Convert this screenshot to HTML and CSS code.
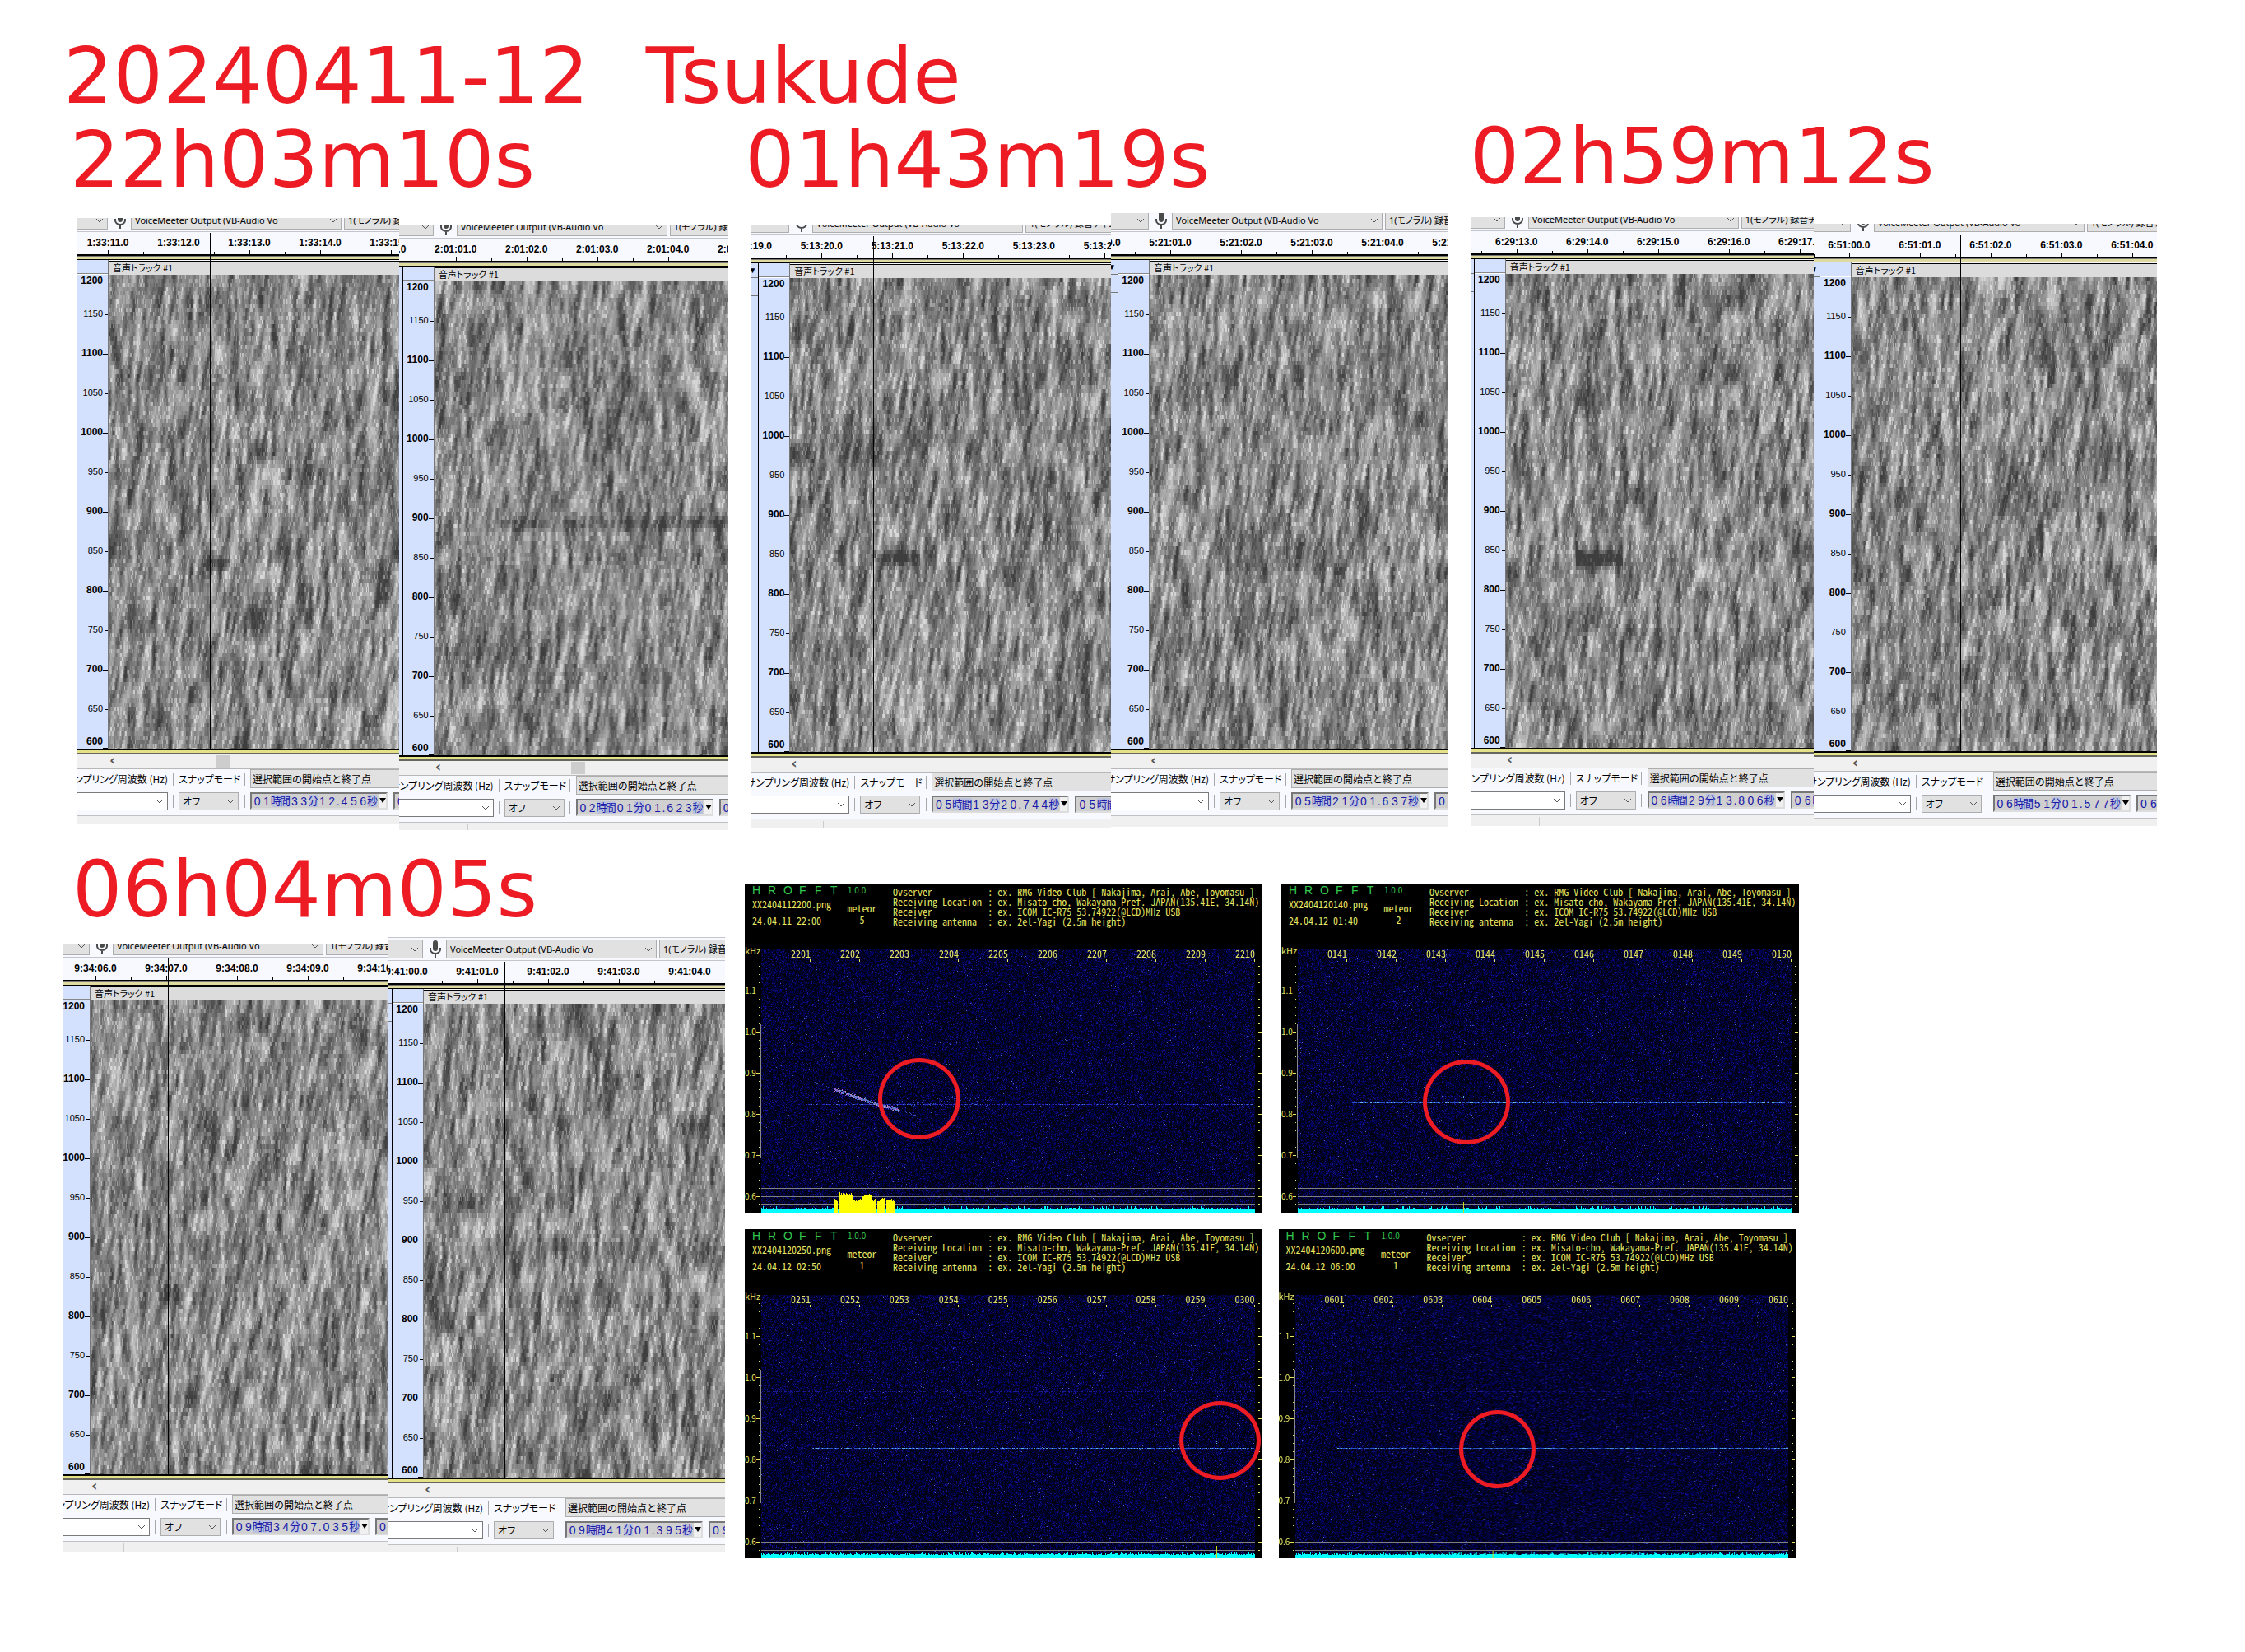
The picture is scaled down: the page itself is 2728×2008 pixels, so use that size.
FILE: index.html
```html
<!DOCTYPE html>
<html lang="ja">
<head>
<meta charset="utf-8">
<title>20240411-12 Tsukude</title>
<link rel="stylesheet" href="styles.css">
</head>
<body>
<svg width="0" height="0" class="defs" aria-hidden="true">
  <symbol id="mic" viewBox="0 0 14 22"><rect x="4" y="0" width="6" height="13" rx="3" fill="#4a4a4a"/><path d="M1 9v2a6 5 0 0 0 12 0V9M7 16v5" fill="none" stroke="#4a4a4a" stroke-width="2"/></symbol>
</svg>
<main>
<h1><span>20240411-12</span><span>Tsukude</span></h1>

<div class="row row-top">
<section class="event">
<h2>22h03m10s</h2>
<div class="pair pair-1">
  <article class="panel p1">
    <div class="toolbar"><select class="lead" aria-label="ホスト"></select><svg class="mic"><use href="#mic"/></svg><select class="device" aria-label="録音デバイス"><option>VoiceMeeter Output (VB-Audio Vo</option></select><select class="channels" aria-label="録音チャンネル"><option>1(モノラル) 録音チャンネル</option></select></div>
    <div class="ruler"><span>1:33:11.0</span><span>1:33:12.0</span><span>1:33:13.0</span><span>1:33:14.0</span><span>1:33:15.0</span></div>
    <div class="track"><div class="stub"></div><ol class="scale"><li>1200</li><li>1150</li><li>1100</li><li>1050</li><li>1000</li><li>950</li><li>900</li><li>850</li><li>800</li><li>750</li><li>700</li><li>650</li><li>600</li></ol>
      <div class="wave"><h3>音声トラック #1</h3><canvas data-seed="11" data-echo="119,147,350,20,10"></canvas></div></div>
    <div class="scroll"><b>‹</b><i></i></div>
    <div class="controls">
      <label class="rate-label" for="r1">サンプリング周波数 (Hz)</label><i class="sep"></i><label for="s1">スナップモード</label><i class="sep"></i><select class="range" aria-label="選択範囲"><option>選択範囲の開始点と終了点</option></select>
      <select id="r1" class="rate"></select><i class="sep"></i><select id="s1" class="snap"><option>オフ</option></select><i class="sep"></i><div class="times"><output>01時間33分12.456秒</output><output>01</output></div>
    </div>
    <div class="status"></div>
  </article>
  <article class="panel p2">
    <div class="toolbar"><select class="lead" aria-label="ホスト"></select><svg class="mic"><use href="#mic"/></svg><select class="device" aria-label="録音デバイス"><option>VoiceMeeter Output (VB-Audio Vo</option></select><select class="channels" aria-label="録音チャンネル"><option>1(モノラル) 録音チャンネル</option></select></div>
    <div class="ruler"><span>2:01:00.0</span><span>2:01:01.0</span><span>2:01:02.0</span><span>2:01:03.0</span><span>2:01:04.0</span><span>2:01:05.0</span></div>
    <div class="track"><div class="stub"></div><ol class="scale"><li>1200</li><li>1150</li><li>1100</li><li>1050</li><li>1000</li><li>950</li><li>900</li><li>850</li><li>800</li><li>750</li><li>700</li><li>650</li><li>600</li></ol>
      <div class="wave"><h3>音声トラック #1</h3><canvas data-seed="22" data-echo="80,370,294,12,9"></canvas></div></div>
    <div class="scroll"><b>‹</b><i></i></div>
    <div class="controls">
      <label class="rate-label" for="r2">サンプリング周波数 (Hz)</label><i class="sep"></i><label for="s2">スナップモード</label><i class="sep"></i><select class="range" aria-label="選択範囲"><option>選択範囲の開始点と終了点</option></select>
      <select id="r2" class="rate"></select><i class="sep"></i><select id="s2" class="snap"><option>オフ</option></select><i class="sep"></i><div class="times"><output>02時間01分01.623秒</output><output>02</output></div>
    </div>
    <div class="status"></div>
  </article>
</div>
</section>

<section class="event">
<h2>01h43m19s</h2>
<div class="pair pair-2">
  <article class="panel p3">
    <div class="toolbar"><select class="lead" aria-label="ホスト"></select><svg class="mic"><use href="#mic"/></svg><select class="device" aria-label="録音デバイス"><option>VoiceMeeter Output (VB-Audio Vo</option></select><select class="channels" aria-label="録音チャンネル"><option>1(モノラル) 録音チャンネル</option></select></div>
    <div class="ruler"><span>5:13:19.0</span><span>5:13:20.0</span><span>5:13:21.0</span><span>5:13:22.0</span><span>5:13:23.0</span><span>5:13:24.0</span></div>
    <div class="track"><div class="stub menu"></div><ol class="scale"><li>1200</li><li>1150</li><li>1100</li><li>1050</li><li>1000</li><li>950</li><li>900</li><li>850</li><li>800</li><li>750</li><li>700</li><li>650</li><li>600</li></ol>
      <div class="wave"><h3>音声トラック #1</h3><canvas data-seed="33" data-echo="102,158,340,16,10"></canvas></div></div>
    <div class="scroll"><b>‹</b></div>
    <div class="controls">
      <label class="rate-label" for="r3">サンプリング周波数 (Hz)</label><i class="sep"></i><label for="s3">スナップモード</label><i class="sep"></i><select class="range" aria-label="選択範囲"><option>選択範囲の開始点と終了点</option></select>
      <select id="r3" class="rate"></select><i class="sep"></i><select id="s3" class="snap"><option>オフ</option></select><i class="sep"></i><div class="times"><output>05時間13分20.744秒</output><output>05時間</output></div>
    </div>
    <div class="status"></div>
  </article>
  <article class="panel p4">
    <div class="toolbar"><select class="lead" aria-label="ホスト"></select><svg class="mic"><use href="#mic"/></svg><select class="device" aria-label="録音デバイス"><option>VoiceMeeter Output (VB-Audio Vo</option></select><select class="channels" aria-label="録音チャンネル"><option>1(モノラル) 録音チャンネル</option></select></div>
    <div class="ruler"><span>5:21:00.0</span><span>5:21:01.0</span><span>5:21:02.0</span><span>5:21:03.0</span><span>5:21:04.0</span><span>5:21:05.0</span></div>
    <div class="track"><div class="stub menu"></div><ol class="scale"><li>1200</li><li>1150</li><li>1100</li><li>1050</li><li>1000</li><li>950</li><li>900</li><li>850</li><li>800</li><li>750</li><li>700</li><li>650</li><li>600</li></ol>
      <div class="wave"><h3>音声トラック #1</h3><canvas data-seed="44" data-echo="80,245,354,5,8"></canvas></div></div>
    <div class="scroll"><b>‹</b></div>
    <div class="controls">
      <label class="rate-label" for="r4">サンプリング周波数 (Hz)</label><i class="sep"></i><label for="s4">スナップモード</label><i class="sep"></i><select class="range" aria-label="選択範囲"><option>選択範囲の開始点と終了点</option></select>
      <select id="r4" class="rate"></select><i class="sep"></i><select id="s4" class="snap"><option>オフ</option></select><i class="sep"></i><div class="times"><output>05時間21分01.637秒</output><output>05</output></div>
    </div>
    <div class="status"></div>
  </article>
</div>
</section>

<section class="event raised">
<h2>02h59m12s</h2>
<div class="pair pair-3">
  <article class="panel p5">
    <div class="toolbar"><select class="lead" aria-label="ホスト"></select><svg class="mic"><use href="#mic"/></svg><select class="device" aria-label="録音デバイス"><option>VoiceMeeter Output (VB-Audio Vo</option></select><select class="channels" aria-label="録音チャンネル"><option>1(モノラル) 録音チャンネル</option></select></div>
    <div class="ruler"><span>6:29:13.0</span><span>6:29:14.0</span><span>6:29:15.0</span><span>6:29:16.0</span><span>6:29:17.0</span></div>
    <div class="track"><div class="stub"></div><ol class="scale"><li>1200</li><li>1150</li><li>1100</li><li>1050</li><li>1000</li><li>950</li><li>900</li><li>850</li><li>800</li><li>750</li><li>700</li><li>650</li><li>600</li></ol>
      <div class="wave"><h3>音声トラック #1</h3><canvas data-seed="55" data-echo="84,142,346,24,11"></canvas></div></div>
    <div class="scroll"><b>‹</b></div>
    <div class="controls">
      <label class="rate-label" for="r5">サンプリング周波数 (Hz)</label><i class="sep"></i><label for="s5">スナップモード</label><i class="sep"></i><select class="range" aria-label="選択範囲"><option>選択範囲の開始点と終了点</option></select>
      <select id="r5" class="rate"></select><i class="sep"></i><select id="s5" class="snap"><option>オフ</option></select><i class="sep"></i><div class="times"><output>06時間29分13.806秒</output><output>06時</output></div>
    </div>
    <div class="status"></div>
  </article>
  <article class="panel p6">
    <div class="toolbar"><select class="lead" aria-label="ホスト"></select><svg class="mic"><use href="#mic"/></svg><select class="device" aria-label="録音デバイス"><option>VoiceMeeter Output (VB-Audio Vo</option></select><select class="channels" aria-label="録音チャンネル"><option>1(モノラル) 録音チャンネル</option></select></div>
    <div class="ruler"><span>6:51:00.0</span><span>6:51:01.0</span><span>6:51:02.0</span><span>6:51:03.0</span><span>6:51:04.0</span></div>
    <div class="track"><div class="stub menu"></div><ol class="scale"><li>1200</li><li>1150</li><li>1100</li><li>1050</li><li>1000</li><li>950</li><li>900</li><li>850</li><li>800</li><li>750</li><li>700</li><li>650</li><li>600</li></ol>
      <div class="wave"><h3>音声トラック #1</h3><canvas data-seed="66"></canvas></div></div>
    <div class="scroll"><b>‹</b></div>
    <div class="controls">
      <label class="rate-label" for="r6">サンプリング周波数 (Hz)</label><i class="sep"></i><label for="s6">スナップモード</label><i class="sep"></i><select class="range" aria-label="選択範囲"><option>選択範囲の開始点と終了点</option></select>
      <select id="r6" class="rate"></select><i class="sep"></i><select id="s6" class="snap"><option>オフ</option></select><i class="sep"></i><div class="times"><output>06時間51分01.577秒</output><output>06</output></div>
    </div>
    <div class="status"></div>
  </article>
</div>
</section>
</div>

<div class="row row-bottom">
<section class="event indented">
<h2>06h04m05s</h2>
<div class="pair pair-4">
  <article class="panel p7">
    <div class="toolbar"><select class="lead" aria-label="ホスト"></select><svg class="mic"><use href="#mic"/></svg><select class="device" aria-label="録音デバイス"><option>VoiceMeeter Output (VB-Audio Vo</option></select><select class="channels" aria-label="録音チャンネル"><option>1(モノラル) 録音チャンネル</option></select></div>
    <div class="ruler"><span>9:34:06.0</span><span>9:34:07.0</span><span>9:34:08.0</span><span>9:34:09.0</span><span>9:34:10.0</span></div>
    <div class="track"><div class="stub"></div><ol class="scale"><li>1200</li><li>1150</li><li>1100</li><li>1050</li><li>1000</li><li>950</li><li>900</li><li>850</li><li>800</li><li>750</li><li>700</li><li>650</li><li>600</li></ol>
      <div class="wave"><h3>音声トラック #1</h3><canvas data-seed="77" data-echo="88,108,354,14,10"></canvas></div></div>
    <div class="scroll"><b>‹</b></div>
    <div class="controls">
      <label class="rate-label" for="r7">サンプリング周波数 (Hz)</label><i class="sep"></i><label for="s7">スナップモード</label><i class="sep"></i><select class="range" aria-label="選択範囲"><option>選択範囲の開始点と終了点</option></select>
      <select id="r7" class="rate"></select><i class="sep"></i><select id="s7" class="snap"><option>オフ</option></select><i class="sep"></i><div class="times"><output>09時間34分07.035秒</output><output>09</output></div>
    </div>
    <div class="status"></div>
  </article>
  <article class="panel p8">
    <div class="toolbar"><select class="lead" aria-label="ホスト"></select><svg class="mic"><use href="#mic"/></svg><select class="device" aria-label="録音デバイス"><option>VoiceMeeter Output (VB-Audio Vo</option></select><select class="channels" aria-label="録音チャンネル"><option>1(モノラル) 録音チャンネル</option></select></div>
    <div class="ruler"><span>9:41:00.0</span><span>9:41:01.0</span><span>9:41:02.0</span><span>9:41:03.0</span><span>9:41:04.0</span></div>
    <div class="track"><div class="stub"></div><ol class="scale"><li>1200</li><li>1150</li><li>1100</li><li>1050</li><li>1000</li><li>950</li><li>900</li><li>850</li><li>800</li><li>750</li><li>700</li><li>650</li><li>600</li></ol>
      <div class="wave"><h3>音声トラック #1</h3><canvas data-seed="88"></canvas></div></div>
    <div class="scroll"><b>‹</b></div>
    <div class="controls">
      <label class="rate-label" for="r8">サンプリング周波数 (Hz)</label><i class="sep"></i><label for="s8">スナップモード</label><i class="sep"></i><select class="range" aria-label="選択範囲"><option>選択範囲の開始点と終了点</option></select>
      <select id="r8" class="rate"></select><i class="sep"></i><select id="s8" class="snap"><option>オフ</option></select><i class="sep"></i><div class="times"><output>09時間41分01.395秒</output><output>09</output></div>
    </div>
    <div class="status"></div>
  </article>
</div>
</section>

<div class="ffts">
<div class="fft-row">
  <article class="fft c1">
    <header>
      <div class="name"><b>H</b><b>R</b><b>O</b><b>F</b><b>F</b><b>T</b><span>1.0.0</span></div>
      <div class="file">XX2404112200.png</div><div class="date">24.04.11 22:00</div><div class="count">meteor<br>5</div>
      <table><tr><td>Ovserver</td><td>: ex. RMG Video Club [ Nakajima, Arai, Abe, Toyomasu ]</td></tr><tr><td>Receiving Location</td><td>: ex. Misato-cho, Wakayama-Pref. JAPAN(135.41E, 34.14N)</td></tr><tr><td>Receiver</td><td>: ex. ICOM IC-R75 53.74922(@LCD)MHz USB</td></tr><tr><td>Receiving antenna</td><td>: ex. 2el-Yagi (2.5m height)</td></tr></table>
    </header>
    <div class="graph"><ul class="khz"><li>kHz</li><li>1.1</li><li>1.0</li><li>0.9</li><li>0.8</li><li>0.7</li><li>0.6</li></ul>
      <div class="plot"><canvas data-seed="101" data-line="188,55" data-soft="1" data-streak="1"></canvas><div class="clock"><span>2201</span><span>2202</span><span>2203</span><span>2204</span><span>2205</span><span>2206</span><span>2207</span><span>2208</span><span>2209</span><span>2210</span></div></div>
      <div class="edge"></div></div>
    <div class="ring"></div>
  </article>
  <article class="fft c2">
    <header>
      <div class="name"><b>H</b><b>R</b><b>O</b><b>F</b><b>F</b><b>T</b><span>1.0.0</span></div>
      <div class="file">XX2404120140.png</div><div class="date">24.04.12 01:40</div><div class="count">meteor<br>2</div>
      <table><tr><td>Ovserver</td><td>: ex. RMG Video Club [ Nakajima, Arai, Abe, Toyomasu ]</td></tr><tr><td>Receiving Location</td><td>: ex. Misato-cho, Wakayama-Pref. JAPAN(135.41E, 34.14N)</td></tr><tr><td>Receiver</td><td>: ex. ICOM IC-R75 53.74922(@LCD)MHz USB</td></tr><tr><td>Receiving antenna</td><td>: ex. 2el-Yagi (2.5m height)</td></tr></table>
    </header>
    <div class="graph"><ul class="khz"><li>kHz</li><li>1.1</li><li>1.0</li><li>0.9</li><li>0.8</li><li>0.7</li><li>0.6</li></ul>
      <div class="plot"><canvas data-seed="102" data-line="186,65" data-marks="201,13,255,9"></canvas><div class="clock"><span>0141</span><span>0142</span><span>0143</span><span>0144</span><span>0145</span><span>0146</span><span>0147</span><span>0148</span><span>0149</span><span>0150</span></div></div>
      <div class="edge"></div></div>
    <div class="ring"></div>
  </article>
</div>
<div class="fft-row tight">
  <article class="fft c3">
    <header>
      <div class="name"><b>H</b><b>R</b><b>O</b><b>F</b><b>F</b><b>T</b><span>1.0.0</span></div>
      <div class="file">XX2404120250.png</div><div class="date">24.04.12 02:50</div><div class="count">meteor<br>1</div>
      <table><tr><td>Ovserver</td><td>: ex. RMG Video Club [ Nakajima, Arai, Abe, Toyomasu ]</td></tr><tr><td>Receiving Location</td><td>: ex. Misato-cho, Wakayama-Pref. JAPAN(135.41E, 34.14N)</td></tr><tr><td>Receiver</td><td>: ex. ICOM IC-R75 53.74922(@LCD)MHz USB</td></tr><tr><td>Receiving antenna</td><td>: ex. 2el-Yagi (2.5m height)</td></tr></table>
    </header>
    <div class="graph"><ul class="khz"><li>kHz</li><li>1.1</li><li>1.0</li><li>0.9</li><li>0.8</li><li>0.7</li><li>0.6</li></ul>
      <div class="plot"><canvas data-seed="103" data-line="186,62" data-marks="553,15"></canvas><div class="clock"><span>0251</span><span>0252</span><span>0253</span><span>0254</span><span>0255</span><span>0256</span><span>0257</span><span>0258</span><span>0259</span><span>0300</span></div></div>
      <div class="edge"></div></div>
    <div class="ring"></div>
  </article>
  <article class="fft c4">
    <header>
      <div class="name"><b>H</b><b>R</b><b>O</b><b>F</b><b>F</b><b>T</b><span>1.0.0</span></div>
      <div class="file">XX2404120600.png</div><div class="date">24.04.12 06:00</div><div class="count">meteor<br>1</div>
      <table><tr><td>Ovserver</td><td>: ex. RMG Video Club [ Nakajima, Arai, Abe, Toyomasu ]</td></tr><tr><td>Receiving Location</td><td>: ex. Misato-cho, Wakayama-Pref. JAPAN(135.41E, 34.14N)</td></tr><tr><td>Receiver</td><td>: ex. ICOM IC-R75 53.74922(@LCD)MHz USB</td></tr><tr><td>Receiving antenna</td><td>: ex. 2el-Yagi (2.5m height)</td></tr></table>
    </header>
    <div class="graph"><ul class="khz"><li>kHz</li><li>1.1</li><li>1.0</li><li>0.9</li><li>0.8</li><li>0.7</li><li>0.6</li></ul>
      <div class="plot"><canvas data-seed="104" data-line="186,50" data-marks="240,9"></canvas><div class="clock"><span>0601</span><span>0602</span><span>0603</span><span>0604</span><span>0605</span><span>0606</span><span>0607</span><span>0608</span><span>0609</span><span>0610</span></div></div>
      <div class="edge"></div></div>
    <div class="ring"></div>
  </article>
</div>
</div>
</div>
</main>
<script src="plots.js"></script>
</body>
</html>
```
FILE: styles.css
```css
* { box-sizing: border-box; }
body { margin: 0; background: #fff; color: #000; font: 12px/16px "Liberation Sans", "Noto Sans CJK JP", sans-serif; }
h1, h2, h3, ol, ul { margin: 0; padding: 0; font-weight: normal; list-style: none; }
.defs { position: absolute; }
main { padding: 41px 0 0; }
h1, h2 { font: 95px/102px "DejaVu Sans", sans-serif; color: #ed1c24; white-space: nowrap; }
h1 { display: flex; gap: 69px; padding-left: 77px; }

.row { display: grid; }
.row-top { grid-template-columns: 792fr 846fr 833fr; gap: 28px; padding: 0 107px 0 93px; }
.row-bottom { grid-template-columns: 805fr 1281fr; gap: 24px; padding: 0 542px 0 76px; margin-top: 21px; }
.event h2 { margin-left: -8px; }
.event.raised h2 { margin: -4px 0 4px -2px; }
.event.indented h2 { margin-left: 12px; }
.pair { display: grid; align-items: start; }
.pair-1 { grid-template-columns: 392fr 401fr; }
.pair-2 { grid-template-columns: 436fr 409fr; }
.pair-3 { grid-template-columns: 416fr 417fr; }
.pair-4 { grid-template-columns: 396fr 409fr; }

/* Per-capture settings: gap above, visible toolbar and status height,
   left edge of the spectrogram, first ruler label, cursor */
.p1 { --top: 20px; --bar: 17px; --foot: 9px;  --left: 38px; --tick: 38px;  --cursor: 162px; --thumb: 126px; }
.p2 { --top: 28px; --bar: 17px; --foot: 9px;  --left: 42px; --tick: -17px; --cursor: 122px; --thumb: 162px; }
.p3 { --top: 28px; --bar: 13px; --foot: 11px; --left: 46px; --tick: -1px;  --cursor: 148px; }
.p4 { --top: 14px; --bar: 23px; --foot: 13px; --left: 46px; --tick: -14px; --cursor: 126px; }
.p5 { --top: 19px; --bar: 17px; --foot: 13px; --left: 41px; --tick: 55px;  --cursor: 123px; }
.p6 { --top: 27px; --bar: 13px; --foot: 9px;  --left: 45px; --tick: 43px;  --cursor: 178px; }
.p7 { --top: 15px; --bar: 17px; --foot: 13px; --left: 33px; --tick: 40px;  --cursor: 128px; }
.p8 { --top: 7px;  --bar: 29px; --foot: 9px;  --left: 42px; --tick: 22px;  --cursor: 141px; }

.panel { position: relative; margin-top: var(--top); overflow: hidden; background: #f8f9ff; }
.panel::after { content: ""; position: absolute; left: var(--cursor); top: calc(var(--bar) + 1px); width: 1px; height: 627px; background: #000; }

select { appearance: none; border: 1px solid #adadad; border-radius: 0; margin: 0; padding: 0 20px 0 4px; color: #000; font: 11px/16px "Noto Sans", "Noto Sans CJK JP", sans-serif;
  background: #e1e1e1 url("data:image/svg+xml,%3Csvg xmlns='http://www.w3.org/2000/svg' width='10' height='6'%3E%3Cpath d='M1 1l4 4 4-4' fill='none' stroke='%23555'/%3E%3C/svg%3E") no-repeat right 4px center; }
.toolbar { display: flex; align-items: flex-end; height: var(--bar); padding-bottom: 2px; border-bottom: 1px solid #c4c4cc; overflow: hidden; }
.p8 .toolbar { border-top: 1px solid #c4c4cc; }
.toolbar select { height: 23px; flex: none; }
.toolbar .lead { width: calc(var(--left) + 1px); margin-left: -1px; }
.mic { width: 14px; height: 22px; flex: none; margin: 0 6px 0 8px; }
.device { width: 256px; }
.toolbar .channels { width: 160px; margin-left: 3px; font-feature-settings: "palt"; }

.ruler { display: flex; height: 27px; padding-top: 5px; overflow: hidden; font-weight: bold;
  background-image: repeating-linear-gradient(90deg, #000 0 1px, transparent 1px 86px), repeating-linear-gradient(90deg, #000 0 1px, transparent 1px 43px);
  background-size: 86px 5px, 43px 3px; background-repeat: repeat-x; background-position: var(--tick) 100%, var(--tick) 100%; }
.ruler span { flex: 0 0 86px; text-align: center; }
.ruler span:first-child { margin-left: calc(var(--tick) - 43px); }

.track { display: flex; padding: 7px 0;
  background: linear-gradient(#000 2px, #777 2px 3px, #dedaa0 3px 6px, #000 6px) 0 0 / 100% 7px no-repeat,
    linear-gradient(#000 2px, #e5e189 2px 5px, #66665f 5px) 0 100% / 100% 7px no-repeat; }
.stub { flex: 0 0 calc(var(--left) - 37px); background: #d3e1ff; border-right: 1px solid #000; overflow: hidden; font-size: 10px; }
.stub::before { content: ""; display: block; height: 39px; border-bottom: 1px solid #777; background: linear-gradient(#777, #777) 0 17px / 100% 1px no-repeat; }
.menu::before { content: "▼"; direction: rtl; padding-right: 2px; line-height: 18px; }
.scale { flex: none; width: 37px; background: #d3e1ff; padding-top: 18px; font-size: 11px; text-align: right; }
.p7 .stub, .p1 .stub { display: none; }
.p7 .scale { width: 33px; }
.p1 .scale { width: 38px; }
.scale::before { content: ""; display: block; margin-top: -2px; height: 2px; background: linear-gradient(#888 1px, #fff 1px); }
.scale li { height: 48px; line-height: 46px; padding-right: 6px; background: linear-gradient(#000, #000) 100% 50% / 4px 1px no-repeat; }
.scale li:nth-child(odd) { font-size: 12px; font-weight: bold; background-size: 6px 1px; }
.scale li:first-child { height: 24px; line-height: 14px; background: none; }
.scale li:last-child { height: 24px; line-height: 14px; padding-top: 8px; background-position: 100% 100%; }
.wave { flex: 1; min-width: 0; border-left: 1px solid #777; }
.wave h3 { margin-top: 1px; height: 17px; border-top: 1px solid #000; padding-left: 5px; background: #dcdcdc; font: 11px/15px "Noto Sans CJK JP", sans-serif; font-feature-settings: "palt"; white-space: nowrap; }
.wave canvas { display: block; width: 100%; height: 576px; }

.scroll { display: flex; height: 18px; padding-left: calc(var(--left) + 2px); background: #f0f0f0; border-bottom: 1px solid #b8b8b8; font: bold 18px/14px "DejaVu Sans", sans-serif; color: #555; }
.scroll b { width: 8px; }
.scroll i { width: 17px; height: 15px; margin: 1px 0 0 calc(var(--thumb) - 5px); background: #cdcdcd; }

.controls { display: grid; grid-template-columns: calc(var(--left) + 73px) 13px 73px 14px minmax(0, 1fr); grid-template-rows: 23px 22px; row-gap: 5px; height: 57px; border-bottom: 1px solid #c0c0c4; }
.controls label { font: 12px/24px "Noto Sans CJK JP", sans-serif; font-feature-settings: "palt"; white-space: nowrap; }
.rate-label { display: flex; justify-content: flex-end; overflow: hidden; }
.sep { justify-self: center; align-self: center; width: 1px; height: 16px; background: #a8a8a8; }
.controls select { font-family: "Noto Sans CJK JP", sans-serif; font-size: 12px; width: 100%; }
.controls .range { border-right: 0; background-image: none; padding: 0 0 0 2px; }
.controls .rate { border-left: 0; border-color: #7a7a7a; background-color: #fff; }
.controls .snap { font-feature-settings: "palt"; }
.times { display: flex; gap: 7px; overflow: hidden; }
output { flex: none; display: flex; width: 167px; height: 21px; padding: 1px 11px 1px 1px; border: 2px solid; border-color: #777 #ddd #ddd #777; color: #1818a8; font: 14px/16px "Liberation Sans", "Noto Sans CJK JP", sans-serif;
  background: linear-gradient(#f0f0f0, #f0f0f0) 154px 0 / 9px 100% no-repeat #d0d0d0; position: relative; }
output::after { content: ""; position: absolute; right: 0; top: 5px; border: 4px solid transparent; border-top: 6px solid #000; border-bottom: 0; }
output span { flex: 1 0 0; width: 0; display: flex; justify-content: center; }
output .kanji { font-size: 13px; background: #bcc2dc; }
output .dot { flex-grow: 0; flex-basis: 4px; }
output.part { padding-right: 0; }
output.part::after { display: none; }
output.part span { flex: 0 0 12px; }
.status { height: var(--foot); background: linear-gradient(#ccc, #ccc) calc(var(--left) + 41px) 2px / 1px 100% no-repeat #f0f0f0; }

.ffts { padding-top: 44px; }
.fft-row { display: grid; grid-template-columns: 1fr 1fr; gap: 23px; margin-bottom: 20px; }
.tight { gap: 20px; padding-right: 4px; margin-bottom: 0; }
.fft { position: relative; background: #000; color: #e6e664; font: 12px/12px "Noto Sans CJK JP", sans-serif; font-feature-settings: "hwid"; }
.fft header { display: grid; grid-template-columns: 115px 56px 1fr; grid-template-rows: 18px 18px 24px; height: 80px; padding-left: 9px; white-space: pre; overflow: hidden; }
.name { grid-column: 1 / 3; display: flex; font: 14px/16px "Liberation Sans", sans-serif; color: #32c850; }
.name b { flex: 0 0 19px; font-weight: normal; }
.name span { font: 10px/16px "Noto Sans CJK JP", sans-serif; padding-left: 2px; font-feature-settings: normal; }
.file { grid-row: 2; line-height: 14px; }
.date { grid-row: 3; line-height: 18px; }
.count { grid-column: 2; grid-row: 2 / 4; padding-top: 5px; width: 37px; line-height: 14px; text-align: center; }
.fft table { grid-column: 3; grid-row: 1 / 4; border-spacing: 0; margin-top: 4px; align-self: start; }
.fft td { padding: 0; height: 12px; line-height: 12px; }
.fft td:first-child { min-width: 114px; padding-right: 4px; }
.graph { display: flex; height: 320px; }
.khz { flex: 0 0 20px; font-size: 10px; font-feature-settings: normal;
  background: repeating-linear-gradient(#e6e664 0 1px, transparent 1px 50px) 14px 50px / 4px 270px no-repeat, repeating-linear-gradient(#e6e664 0 1px, transparent 1px 10px) 17px 10px / 1px 310px no-repeat, linear-gradient(#888, #888) 19px 91px / 1px 162px no-repeat; }
.khz li { height: 50px; line-height: 50px; white-space: nowrap; }
.khz li:first-child { height: 25px; line-height: 2px; font-size: 11px; }
.plot { flex: 1; min-width: 0; display: grid; }
.plot canvas { grid-area: 1 / 1; width: 100%; height: 320px; }
.clock { grid-area: 1 / 1; display: grid; grid-template-columns: repeat(10, 1fr); text-align: right; height: 15px; line-height: 10px; }
.clock span { background: linear-gradient(#e6e664, #e6e664) 100% 100% / 1px 3px no-repeat; }
.edge { flex: 0 0 9px; background: repeating-linear-gradient(#e6e664 0 1px, transparent 1px 50px) 4px 50px / 4px 270px no-repeat, repeating-linear-gradient(#e6e664 0 1px, transparent 1px 10px) 4px 10px / 2px 310px no-repeat; }
.ring { position: absolute; border: 5px solid #ed1c24; border-radius: 50%; }
.c1 .ring { left: 162px; top: 212px; width: 100px; height: 99px; }
.c2 .ring { left: 172px; top: 214px; width: 106px; height: 103px; }
.c3 .ring { left: 528px; top: 209px; width: 99px; height: 96px; }
.c4 .ring { left: 219px; top: 220px; width: 93px; height: 95px; }
```
FILE: plots.js
```js
function random(seed) {
  let a = seed * 2654435761 >>> 0;
  return () => {
    a = a + 0x6D2B79F5 | 0;
    let t = Math.imul(a ^ a >>> 15, 1 | a);
    t = t + Math.imul(t ^ t >>> 7, 61 | t) ^ t;
    return ((t ^ t >>> 14) >>> 0) / 4294967296;
  };
}

/* Smooth value noise on a lattice of sx by sy cells */
function field(rnd, w, h, sx, sy) {
  const cols = Math.ceil(w / sx) + 2, rows = Math.ceil(h / sy) + 2;
  const g = Float32Array.from({ length: cols * rows }, () => rnd() * 2 - 1);
  const ease = t => t * t * (3 - 2 * t);
  return (x, y) => {
    const fx = x / sx, fy = y / sy, i = Math.floor(fx), j = Math.floor(fy);
    const u = ease(fx - i), v = ease(fy - j), k = j * cols + i;
    return (g[k] * (1 - u) + g[k + 1] * u) * (1 - v) + (g[k + cols] * (1 - u) + g[k + cols + 1] * u) * v;
  };
}

/* Grey audio spectrogram: bins 5px high */
document.querySelectorAll('.wave canvas').forEach(c => {
  const w = c.width = c.clientWidth, h = c.height = 576, ctx = c.getContext('2d');
  const rnd = random(+c.dataset.seed), img = ctx.createImageData(w, h);
  const a = field(rnd, w, h, 5, 30), b = field(rnd, w + 200, h, 4, 24), d = field(rnd, w, h, 14, 30);
  const e = (c.dataset.echo || '').split(',').map(Number);
  for (let y = 0; y < h; y += 5) {
    let fine = 0;
    for (let x = 0; x < w; x++) {
      if (x % 2 === 0 || rnd() < .3) fine = rnd();
      let v = 133 + 50 * a(x, y) + 42 * b(x + y * .2, y) + 10 * d(x, y) + (fine - .5) * 36;
      if (fine > .9) v += 26;
      if (e.length === 5 && x > e[0] && x < e[1]) {
        const dy = (y + 2 - e[2]) / e[4];
        v -= e[3] * 4 * Math.exp(-dy * dy);
      }
      v = Math.max(62, Math.min(216, v));
      for (let r = y; r < Math.min(h, y + 5); r++) {
        const k = (r * w + x) * 4;
        img.data[k] = img.data[k + 1] = img.data[k + 2] = v;
        img.data[k + 3] = 255;
      }
    }
  }
  ctx.putImageData(img, 0, 0);
});

/* HROFFT plot: blue noise, carrier line, level bars */
document.querySelectorAll('.plot canvas').forEach(c => {
  const w = c.width = 600, h = c.height = 320, ctx = c.getContext('2d');
  const rnd = random(+c.dataset.seed), img = ctx.createImageData(w, h);
  for (let i = 0; i < w * h; i++) {
    const n = rnd(), s = rnd();
    let r = 2, g = 2, b = 8 + n * n * 112;
    if (s > .95) { b = 150; r = g = 24; }
    if (s > .998) { r = 70; g = 110; b = 190; }
    img.data.set([r, g, b, 255], i * 4);
  }
  ctx.putImageData(img, 0, 0);
  const dot = (x, y, color) => { ctx.fillStyle = color; ctx.fillRect(x, y, 1, 1); };
  const [ly, lx] = c.dataset.line.split(',').map(Number);
  for (let x = lx; x < w; x++) {
    const s = rnd();
    if (c.dataset.soft) { if (s > .35) dot(x, ly, s > .85 ? '#3c78d8' : '#2828b8'); }
    else if (s > .15) dot(x, ly, s > .75 ? '#5cb4e8' : '#2850c0');
  }
  for (let x = 0; x < w; x++) if (rnd() > .6) dot(x, 117, '#1c1c90');
  if (c.dataset.streak) {
    for (let x = 62; x < 195; x++) {
      const y = x < 142 ? 160 + (x - 62) * .36 : 188 + (x - 142) * .29;
      const core = x > 87 && x < 168;
      for (let k = 0; k < (core ? 7 : 1); k++) {
        const off = (rnd() - .5) * (rnd() - .5) * (core ? 12 : 4);
        if (core || rnd() > .4) dot(x, Math.round(y + off), core ? ['#b48cc8', '#8c5ac8', '#6478d0', '#3a78c0'][Math.floor(rnd() * 4)] : '#3450b0');
      }
    }
    for (let k = 0; k < 60; k++) dot(Math.round(165 + rnd() * 110), Math.round(178 + rnd() * 14), '#2850b8');
  }
  ctx.fillStyle = '#808080';
  [290, 300, 310].forEach(y => ctx.fillRect(0, y, w, 1));
  for (let x = 0; x < w; x++) {
    const s = rnd(), top = 4 + Math.round(s * 2) + (s > .93 ? 2 : 0);
    ctx.fillStyle = '#00ffff';
    ctx.fillRect(x, h - top, 1, top);
    if (c.dataset.streak && x >= 89 && x < 163 && ![93, 140, 151].includes(x)) {
      const t = (x < 94 ? 14 : x < 112 ? 21 : x < 122 ? 13 : x < 135 ? 20 : 14) + Math.round(rnd() * 4);
      ctx.fillStyle = '#ffff00';
      ctx.fillRect(x, h - t, 1, t);
    }
  }
  const m = (c.dataset.marks || '').split(',').map(Number);
  for (let i = 0; i + 1 < m.length; i += 2) {
    ctx.fillStyle = '#c8d820';
    ctx.fillRect(m[i], h - m[i + 1], 1, m[i + 1]);
    dot(m[i], 178, '#58b8c8');
    dot(m[i], 180, '#58b8c8');
  }
});

/* Time fields show every character in a cell of its own */
document.querySelectorAll('output').forEach(o => {
  const text = o.textContent;
  if (text.length < 6) o.classList.add('part');
  o.textContent = '';
  for (const ch of text) {
    const s = document.createElement('span');
    s.textContent = ch;
    if (/[時間分秒]/.test(ch)) s.className = 'kanji';
    if (ch === '.') s.className = 'dot';
    o.append(s);
  }
});
```
